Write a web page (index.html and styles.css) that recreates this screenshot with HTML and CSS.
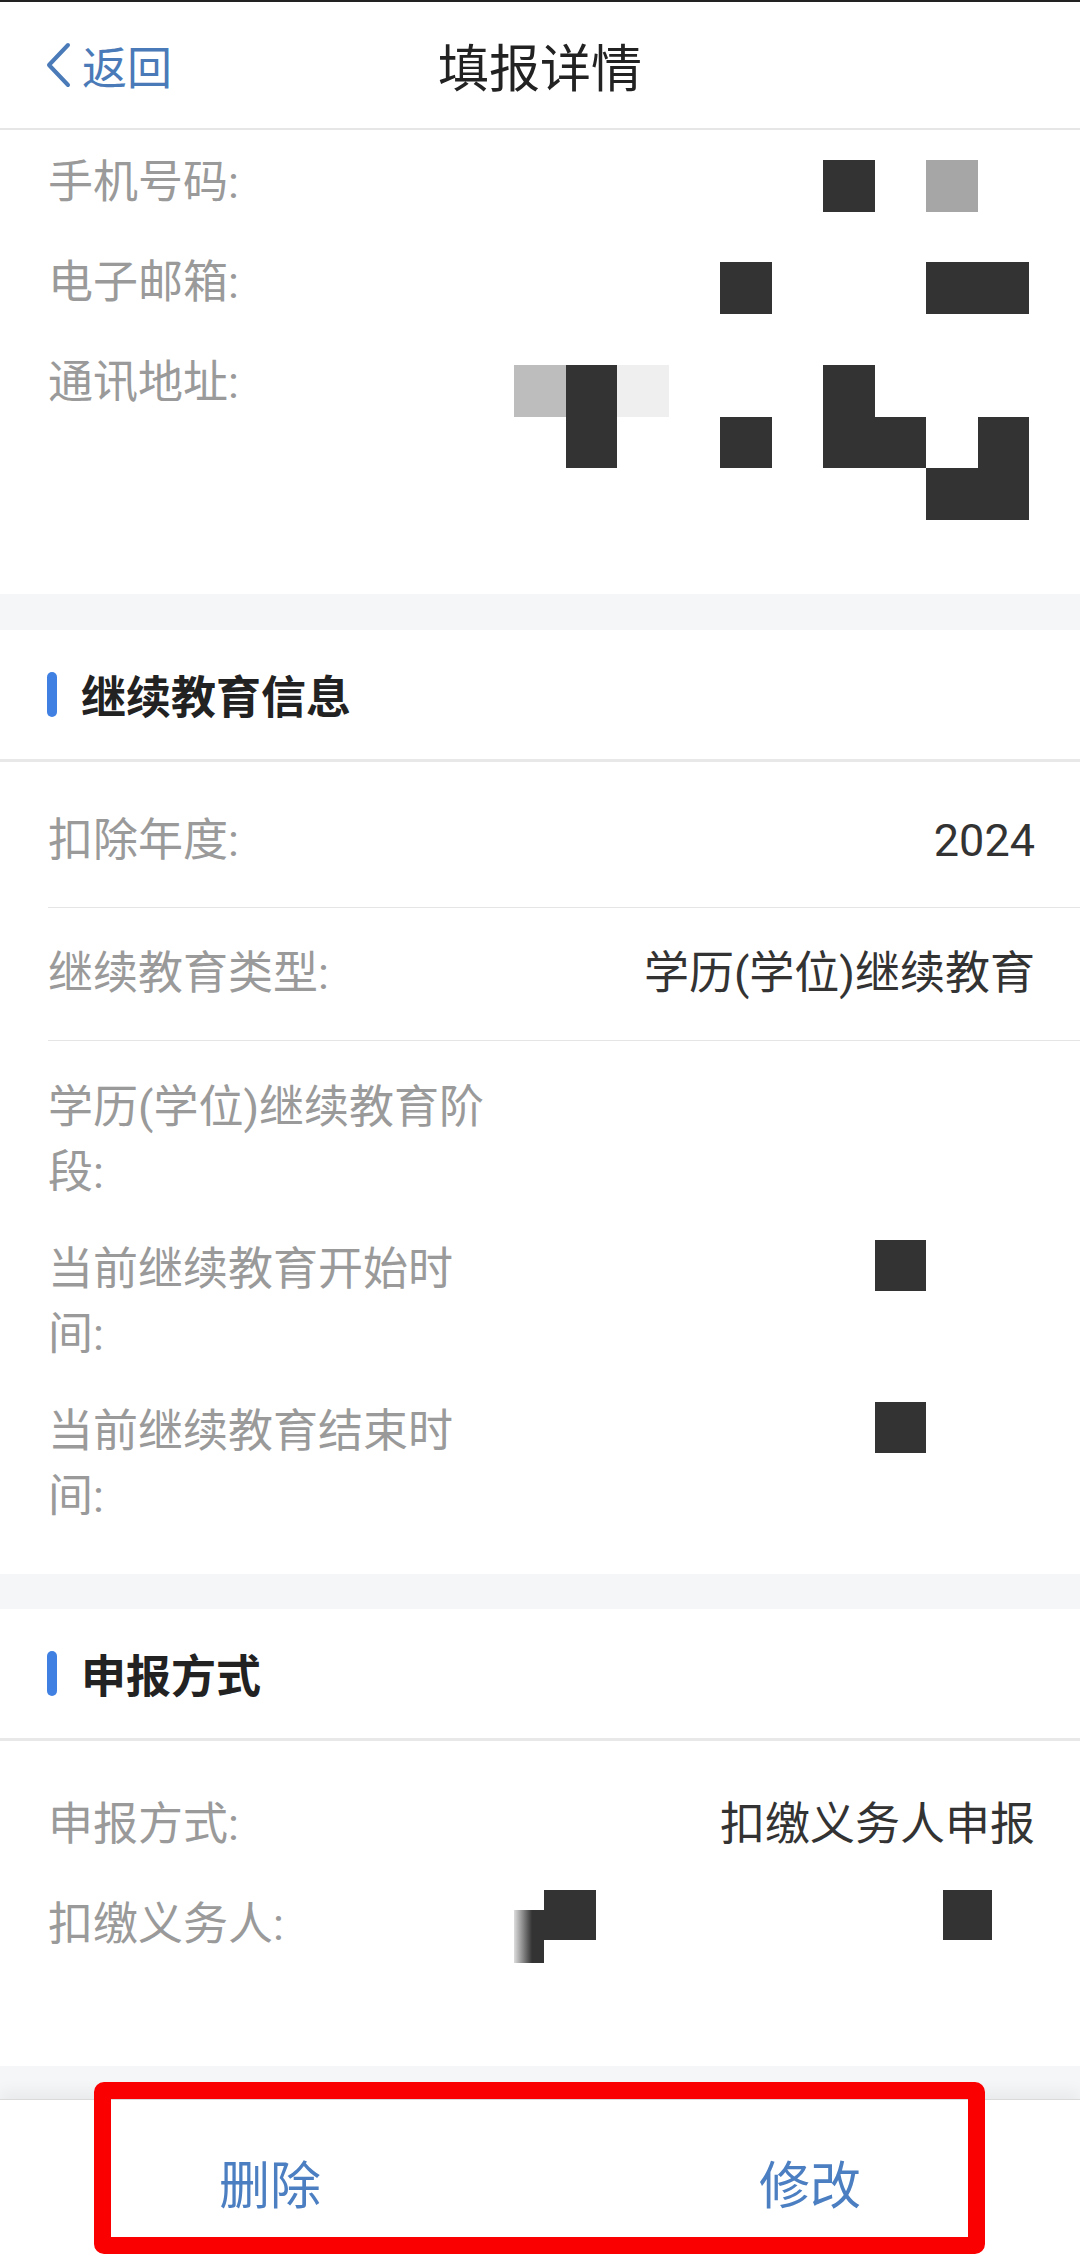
FILE: index.html
```html
<!DOCTYPE html>
<html lang="zh-CN">
<head>
    <meta charset="UTF-8">
    <meta name="viewport" content="width=device-width, initial-scale=1.0">
    <title>填报详情</title>
    <link rel="stylesheet" href="styles.css">
</head>
<body>

    <header class="nav-bar">
        <a class="back-link" href="#">
            <svg class="back-icon" width="26" height="46" viewBox="0 0 26 46">
                <polyline points="23,3 4,23 23,43" fill="none" stroke="currentColor" stroke-width="4" stroke-linecap="round" stroke-linejoin="round"/>
            </svg>
            <span>返回</span>
        </a>
        <h1 class="nav-title">填报详情</h1>
        <span></span>
    </header>

    <main>
        <!-- 联系方式 -->
        <section class="card card-contact">
            <div class="row">
                <div class="row-label">手机号码:</div>
                <div class="row-value">
                    <div class="mosaic mosaic-phone">
                        <span></span><span></span><span></span><span></span><span></span><span></span><span class="d"></span><span></span><span class="g"></span><span></span>
                    </div>
                </div>
            </div>
            <div class="row">
                <div class="row-label">电子邮箱:</div>
                <div class="row-value">
                    <div class="mosaic">
                        <span></span><span></span><span></span><span></span><span class="d"></span><span></span><span></span><span></span><span class="d"></span><span class="d"></span>
                    </div>
                </div>
            </div>
            <div class="row">
                <div class="row-label">通讯地址:</div>
                <div class="row-value">
                    <div class="mosaic mosaic-address">
                        <span class="g"></span><span class="d"></span><span class="l"></span><span></span><span></span><span></span><span class="d"></span><span></span><span></span><span></span>
                        <span></span><span class="d"></span><span></span><span></span><span class="d"></span><span></span><span class="d"></span><span class="d"></span><span></span><span class="d"></span>
                        <span></span><span></span><span></span><span></span><span></span><span></span><span></span><span></span><span class="d"></span><span class="d"></span>
                    </div>
                </div>
            </div>
        </section>

        <!-- 继续教育信息 -->
        <section class="card">
            <h2 class="card-head">继续教育信息</h2>
            <div class="rows-ruled">
                <div class="row row-ruled">
                    <div class="row-label">扣除年度:</div>
                    <div class="row-value">2024</div>
                </div>
                <div class="row row-ruled">
                    <div class="row-label">继续教育类型:</div>
                    <div class="row-value">学历(学位)继续教育</div>
                </div>
            </div>
            <div class="rows-plain">
                <div class="row">
                    <div class="row-label">学历(学位)继续教育阶段:</div>
                    <div class="row-value"></div>
                </div>
                <div class="row">
                    <div class="row-label">当前继续教育开始时间:</div>
                    <div class="row-value">
                        <div class="mosaic mosaic-flush">
                            <span></span><span></span><span></span><span></span><span></span><span></span><span></span><span class="d"></span><span></span><span></span>
                        </div>
                    </div>
                </div>
                <div class="row">
                    <div class="row-label">当前继续教育结束时间:</div>
                    <div class="row-value">
                        <div class="mosaic mosaic-flush">
                            <span></span><span></span><span></span><span></span><span></span><span></span><span></span><span class="d"></span><span></span><span></span>
                        </div>
                    </div>
                </div>
            </div>
        </section>

        <!-- 申报方式 -->
        <section class="card card-filing">
            <h2 class="card-head">申报方式</h2>
            <div class="rows-filing">
                <div class="row">
                    <div class="row-label">申报方式:</div>
                    <div class="row-value">扣缴义务人申报</div>
                </div>
                <div class="row">
                    <div class="row-label">扣缴义务人:</div>
                    <div class="row-value">
                        <div class="mosaic mosaic-agent">
                            <span class="smear"></span><span class="d"></span><span></span><span class="d"></span><span></span>
                        </div>
                    </div>
                </div>
            </div>
        </section>
    </main>

    <footer class="action-bar">
        <button class="action-button">删除</button>
        <button class="action-button">修改</button>
        <div class="highlight-box"></div>
    </footer>

</body>
</html>
```

FILE: styles.css
```css
* {
    box-sizing: border-box;
}

body {
    margin: 0;
    font-family: Roboto, "Noto Sans CJK SC", sans-serif;
    font-size: 45px;
    background-color: #f5f6f8;
    color: #333;
}

.nav-bar {
    display: grid;
    grid-template-columns: 1fr auto 1fr;
    align-items: center;
    height: 130px;
    padding: 0 45px;
    background-color: #fff;
    border-top: 2px solid #222;
    border-bottom: 2px solid #e6e6e6;
}

.back-link {
    display: flex;
    align-items: center;
    gap: 11px;
    color: #4a7ab8;
    text-decoration: none;
    font-size: 45px;
}

.back-icon {
    display: block;
}

.nav-title {
    margin: 0;
    font-size: 51px;
    font-weight: normal;
    color: #222;
}

.card {
    background-color: #fff;
}

.card + .card {
    margin-top: 36px;
}

.card + .card-filing {
    margin-top: 35px;
}

.card-contact {
    padding: 3px 0 56px;
}

.card-head {
    display: flex;
    align-items: center;
    height: 132px;
    margin: 0;
    padding-left: 47px;
    font-size: 45px;
    font-weight: bold;
    color: #222;
    border-bottom: 3px solid #e8e8e8;
}

.card-head::before {
    content: "";
    width: 10px;
    height: 45px;
    margin-right: 24px;
    border-radius: 5px;
    background-color: #3f80e2;
}

.row {
    display: flex;
    padding: 17px 45px 18px 48px;
    line-height: 65px;
}

.row-label {
    flex: 0 0 440px;
    color: #9a9a9a;
}

.row-value {
    flex: 1;
    display: flex;
    justify-content: flex-end;
    text-align: right;
    color: #333;
}

.rows-ruled {
    padding-top: 13px;
}

.row-ruled {
    margin-left: 48px;
    padding: 33px 45px 34px 0;
    border-bottom: 1px solid #e5e5e5;
}

.rows-plain {
    padding: 18px 0 29px;
}

.rows-plain .row {
    padding-top: 16px;
    padding-bottom: 16px;
}

.rows-filing {
    padding: 34px 0 91px;
}

/* 打码区域 */
.mosaic {
    display: grid;
    grid-template-columns: repeat(10, 51.5px);
    grid-auto-rows: 51.5px;
    margin: 12px 6px 0 0;
}

.mosaic-phone {
    margin-top: 10px;
}

.mosaic-address {
    margin-top: 15px;
}

.mosaic-flush {
    margin-top: 3px;
}

.mosaic .d {
    background-color: #333;
}

.mosaic .g {
    background-color: #a6a6a6;
}

.mosaic-address .g {
    background-color: #bdbdbd;
}

.mosaic .l {
    background-color: #efefef;
}

.mosaic-agent {
    grid-template-columns: 30px 52px 347px 49px 37px;
    grid-auto-rows: 50px;
    margin-top: -2px;
}

.mosaic-agent .smear {
    height: 53px;
    margin-top: 20px;
    background: linear-gradient(to right, #ddd, #333 60%);
}

.action-bar {
    position: relative;
    display: flex;
    height: 166px;
    margin-top: 33px;
    background-color: #fff;
    border-top: 1px solid #dadada;
    box-shadow: 0 -8px 14px rgba(0, 0, 0, 0.05);
}

.action-button {
    flex: 1;
    padding: 0;
    background: none;
    border: none;
    font-family: inherit;
    font-size: 51px;
    color: #4b7fc2;
    cursor: pointer;
}

.highlight-box {
    position: absolute;
    top: -18px;
    left: 94px;
    right: 95px;
    bottom: 11px;
    border: 17px solid #fb0000;
    border-radius: 10px;
    pointer-events: none;
}
```
